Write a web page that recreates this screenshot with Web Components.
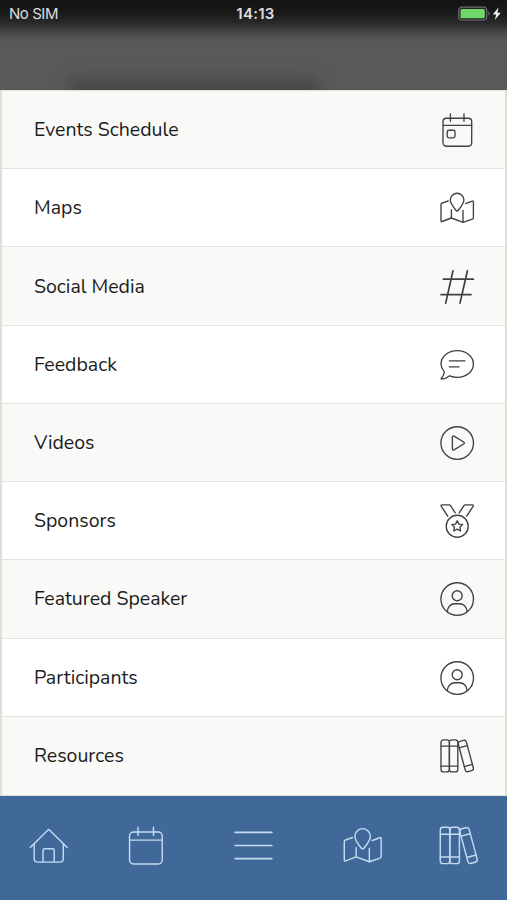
<!DOCTYPE html>
<html lang="en">
<head>
  <meta charset="utf-8">
  <meta name="viewport" content="width=device-width, initial-scale=1">
  <title>Event menu</title>
  <style>
    body {
      margin: 0;
      background: #585858;
    }
  </style>
</head>
<body>
  <event-app>
    <status-bar slot="status" carrier="No SIM" time="14:13"></status-bar>
    <menu-list>
      <menu-item icon="schedule">Events Schedule</menu-item>
      <menu-item icon="map">Maps</menu-item>
      <menu-item icon="hash">Social Media</menu-item>
      <menu-item icon="chat">Feedback</menu-item>
      <menu-item icon="play">Videos</menu-item>
      <menu-item icon="medal">Sponsors</menu-item>
      <menu-item icon="user">Featured Speaker</menu-item>
      <menu-item icon="user">Participants</menu-item>
      <menu-item icon="books">Resources</menu-item>
    </menu-list>
    <tab-bar slot="tabs">
      <line-icon name="home"></line-icon>
      <line-icon name="calendar"></line-icon>
      <line-icon name="menu"></line-icon>
      <line-icon name="map"></line-icon>
      <line-icon name="books"></line-icon>
    </tab-bar>
  </event-app>

  <script>
    const calendarFrame = `
      <rect x="4" y="6.2" width="28.7" height="28" rx="3.4"/>
      <path d="M4 13.3H32.7M11.4 1.9V9.3M25 1.9V9.3"/>`;

    const icons = {
      calendar: calendarFrame,
      schedule: `${calendarFrame}<rect x="8.2" y="18.2" width="7.8" height="7.6" rx="1.8"/>`,
      map: `
        <path d="M9.2 11 3 13.2Q2 13.6 2 14.6V30.7Q2 32 3.2 31.5L12.4 28 24 32.3 33.4 29.1Q34.4 28.7 34.4 27.7V12Q34.4 10.7 33.2 11.2L26.6 13.6"/>
        <path d="M12.4 20V28M24 20.5V32.3"/>
        <path d="M18.1 21Q17.4 21 16.7 20C14.3 17 11.3 13.2 11.3 10A6.8 6.8 0 0 1 24.9 10C24.9 13.2 21.9 17 19.5 20Q18.8 21 18.1 21Z"/>`,
      hash: `<path stroke-width="1.7" d="M14 1.8 6.7 34.1M28.4 1.8 21 34.1M4.4 10.2H34.4M2 25.6H32"/>`,
      chat: `
        <path d="M5.3 24.6C3.3 22.4 2 19.8 2 17 2 9.5 9.2 3.6 18.2 3.6S34.4 9.5 34.4 17 27.2 30.3 18.2 30.3C15.4 30.3 12.9 29.8 10.7 28.8 8.3 30.8 5.6 32 2.6 32Q1.8 31.9 2.5 31C4.5 28.8 5.3 27 5.3 24.6Z"/>
        <path d="M10.4 13.8H26M10.4 19.9H20"/>`,
      play: `
        <circle cx="18.2" cy="18" r="16.3"/>
        <path d="M13.4 12.2V23.8Q13.4 25.7 15 24.9L24.7 19Q26 18 24.7 17L15 11.1Q13.4 10.3 13.4 12.2Z"/>`,
      medal: `
        <circle cx="18.2" cy="23.2" r="11"/>
        <path d="M8.7 13.2 2.3 3.3Q1.5 1.9 3 1.9H10.2Q11 1.9 11.5 2.6L16.2 9.9M27.7 13.2 34.1 3.3Q34.9 1.9 33.4 1.9H26.2Q25.4 1.9 24.9 2.6L20.2 9.9"/>
        <path d="M18.2 17.7 19.9 21.1 23.6 21.6 20.9 24.2 21.6 28 18.2 26.2 14.8 28 15.5 24.2 12.8 21.6 16.5 21.1Z"/>`,
      user: `
        <circle cx="18.2" cy="18" r="16.3"/>
        <circle cx="18.2" cy="14.7" r="5"/>
        <path d="M8.4 30.6C8.6 25.6 12 22.7 16 22.7H20.4C24.4 22.7 27.8 25.6 28 30.6"/>`,
      books: `
        <rect x="2" y="1.9" width="8.4" height="32" rx="2.4"/>
        <rect x="10.4" y="1.9" width="8.4" height="32" rx="2.4"/>
        <path d="M2 8.1H18.8M2 28.1H18.8"/>
        <g transform="rotate(-15 26.8 18)">
          <rect x="22.6" y="2.3" width="8.4" height="31.4" rx="2.4"/>
          <path d="M22.6 8.4H31M22.6 27.8H31"/>
        </g>`,
      home: `
        <path d="M2 19.7 18 4Q18.2 3.8 18.4 4L34.4 19.7"/>
        <path d="M5.4 17V29.4Q5.4 32.6 8.6 32.6H27.8Q31 32.6 31 29.4V17M13.2 32.6V22.4Q13.2 20.8 14.8 20.8H21.4Q23 20.8 23 22.4V32.6"/>`,
      menu: `<path stroke-width="1.5" d="M1.9 6.5H34.1M1.9 18H34.1M1.9 29.5H34.1"/>`
    };

    class LineIcon extends HTMLElement {
      constructor() {
        super();
        this.attachShadow({mode: "open"});
      }

      connectedCallback() {
        this.shadowRoot.innerHTML = `
        <style>
          :host {
            display: block;
            flex: none;
            width: var(--icon-size, 36px);
            height: var(--icon-size, 36px);
          }
          svg {
            display: block;
            width: 100%;
            height: 100%;
            overflow: visible;
            fill: none;
            stroke: currentColor;
            stroke-width: var(--icon-stroke, 1.35);
            stroke-linecap: round;
            stroke-linejoin: round;
          }
        </style>
        <svg viewBox="0 0 36 36" aria-hidden="true">${icons[this.getAttribute("name")]}</svg>
        `;
      }
    }

    class StatusBar extends HTMLElement {
      constructor() {
        super();
        this.attachShadow({mode: "open"});
      }

      connectedCallback() {
        this.shadowRoot.innerHTML = `
        <style>
          :host {
            display: block;
            position: relative;
            height: 90px;
            overflow: hidden;
            background: linear-gradient(#141414 0, #191919 12px, #292929 23px, #434343 31px, #555 39px, #595959 50px);
            color: #dedede;
            font: 15px/18px Inter, "Liberation Sans", sans-serif;
          }
          .status-bar {
            display: grid;
            grid-template-columns: 1fr auto 1fr;
            align-items: center;
            padding: 5px 5px 0 9px;
          }
          .status-bar__carrier {
            letter-spacing: -0.45px;
          }
          .status-bar__time {
            font-weight: 600;
            letter-spacing: 0.25px;
          }
          .status-bar__power {
            justify-self: end;
            display: block;
            margin-right: 1px;
          }
          .page-title {
            position: absolute;
            left: 70px;
            top: 78px;
            width: 248px;
            height: 26px;
            background: #484848;
            filter: blur(7px);
          }
        </style>
        <div class="page-title"></div>
        <div class="status-bar">
          <span class="status-bar__carrier">${this.getAttribute("carrier")}</span>
          <span class="status-bar__time">${this.getAttribute("time")}</span>
          <svg class="status-bar__power" width="43" height="16" viewBox="0 0 43 16">
            <rect x="0.7" y="1.2" width="28" height="12.8" rx="3.2" fill="#222" stroke="#6c6c6c" stroke-width="1.2"/>
            <rect x="2.5" y="3" width="24.3" height="9.2" rx="1.5" fill="#70d66b"/>
            <path d="M30.3 5.5V9.7Q31.7 9 31.7 7.6T30.3 5.5Z" fill="#6c6c6c"/>
            <path d="M40.6 1.2 34.8 8.5H38.2L36.8 14 42.8 6.7H39.4Z" fill="#eee"/>
          </svg>
        </div>
        `;
      }
    }

    class MenuItem extends HTMLElement {
      constructor() {
        super();
        this.attachShadow({mode: "open"});
      }

      connectedCallback() {
        this.shadowRoot.innerHTML = `
        <style>
          :host {
            box-sizing: border-box;
            display: flex;
            align-items: center;
            justify-content: space-between;
            padding: 1px 29.7px 0 32px;
            border-bottom: 1px solid #e3e4df;
            color: #1c1c1c;
            font: 19.5px/26px Nunito, Lato, "Open Sans", sans-serif;
          }
          :host(:nth-child(odd)) {
            background: #f9f9f7;
          }
          :host(:last-child) {
            border-bottom-color: transparent;
          }
          line-icon {
            color: #414141;
          }
        </style>
        <span><slot></slot></span>
        <line-icon name="${this.getAttribute("icon")}"></line-icon>
        `;
      }
    }

    class MenuList extends HTMLElement {
      constructor() {
        super();
        this.attachShadow({mode: "open"});
      }

      connectedCallback() {
        this.shadowRoot.innerHTML = `
        <style>
          :host {
            box-sizing: border-box;
            display: grid;
            grid-auto-rows: 1fr;
            background: #fff;
            border: solid #dfe0d2;
            border-width: 1px 2px;
          }
        </style>
        <slot></slot>
        `;
      }
    }

    class TabBar extends HTMLElement {
      constructor() {
        super();
        this.attachShadow({mode: "open"});
      }

      connectedCallback() {
        this.shadowRoot.innerHTML = `
        <style>
          :host {
            --icon-size: 41px;
            --icon-stroke: 1.25;
            box-sizing: border-box;
            display: grid;
            grid-template-columns: 97.5px 95px 1fr 96px 96.5px;
            place-items: center;
            height: 104px;
            padding-bottom: 5px;
            background: #40699a;
            color: #c3dcf1;
          }
        </style>
        <slot></slot>
        `;
      }
    }

    class EventApp extends HTMLElement {
      constructor() {
        super();
        this.attachShadow({mode: "open"});
      }

      connectedCallback() {
        this.shadowRoot.innerHTML = `
        <style>
          :host {
            display: grid;
            grid-template-rows: auto 1fr auto;
            height: 100vh;
          }
        </style>
        <slot name="status"></slot>
        <slot></slot>
        <slot name="tabs"></slot>
        `;
      }
    }

    window.customElements.define("line-icon", LineIcon);
    window.customElements.define("status-bar", StatusBar);
    window.customElements.define("menu-item", MenuItem);
    window.customElements.define("menu-list", MenuList);
    window.customElements.define("tab-bar", TabBar);
    window.customElements.define("event-app", EventApp);
  </script>
</body>
</html>
